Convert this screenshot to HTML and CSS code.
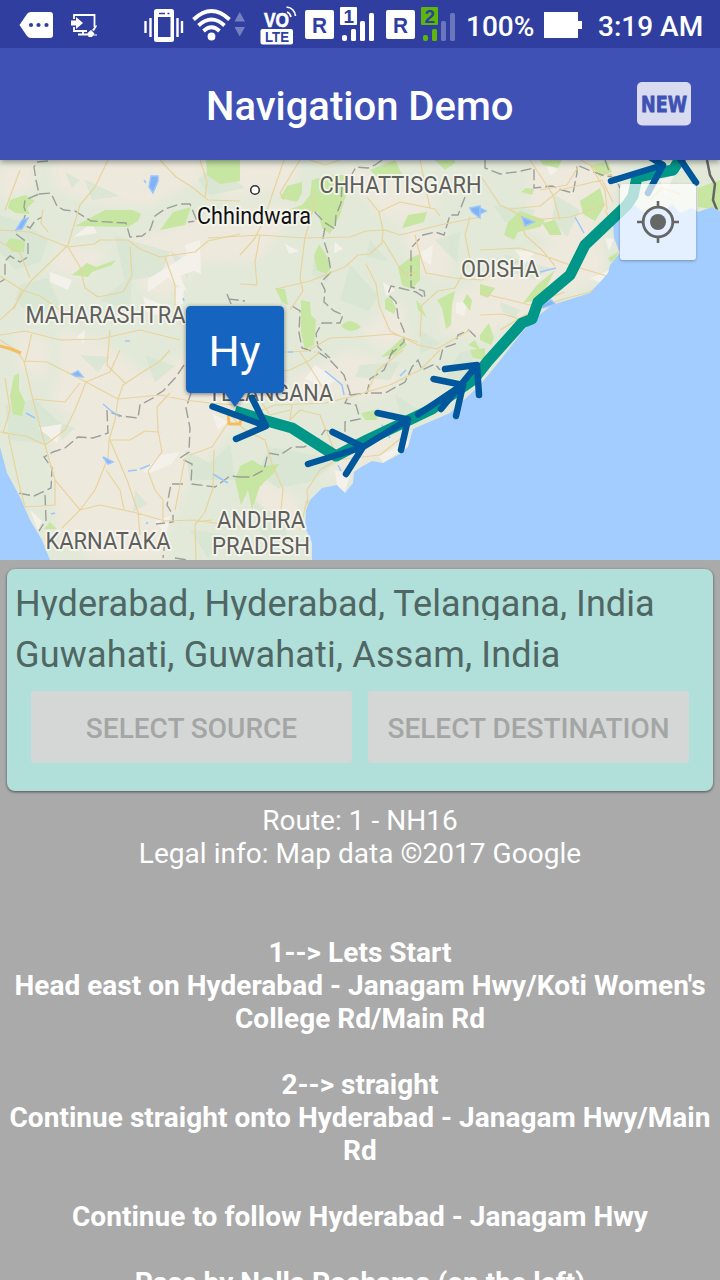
FILE: index.html
```html
<!DOCTYPE html>
<html lang="en">
<head>
<meta charset="utf-8">
<title>Navigation Demo</title>
<link rel="stylesheet" href="styles.css">
</head>
<body>
<div class="screen">
  <div class="status-bar">
    <svg class="status-icon" width="120" height="48" viewBox="0 0 120 48">
      <path fill="#fff" d="M19.500 25L27 14Q28.500 12 31 12H50Q53 12 53 15V35Q53 38 50 38H31Q28.500 38 27 36Z"/>
      <g class="bar-fill"><circle cx="31" cy="25" r="2.100"/><circle cx="38.500" cy="25" r="2.100"/><circle cx="46.500" cy="25" r="2.100"/></g>
      <path fill="none" stroke="#fff" stroke-width="1.800" d="M74 19V15H94.500V27M74 27V31H87M83 31V34M78 34.500H88"/>
      <path fill="#fff" d="M71 20.500H76V17L83 23L76 29V25.500H71ZM87.500 33L91 30L94.500 33.500L92 37H88.500ZM92 30L96 25L97 26L94 31Z"/>
      <path stroke="#fff" d="M93 35H97"/>
    </svg>
    <svg class="status-icon" width="70" height="48" viewBox="120 0 70 48">
      <rect x="154" y="9" width="20" height="33" rx="2.500" fill="#fff"/>
      <rect class="bar-fill" x="158" y="17" width="12.500" height="20"/>
      <path class="bar-line" stroke-width="1.500" d="M159 13.500H165M167.500 13.500H169.500"/>
      <path stroke="#fff" stroke-width="2.400" d="M145.500 21V33M150.500 18V37M177.500 18V37M182 21V33"/>
    </svg>
    <svg class="status-icon" width="60" height="48" viewBox="190 0 60 48">
      <g fill="none" stroke="#fff" stroke-width="3.800"><path d="M193.500 19.500Q211.500 2.500 229.500 19.500"/><path d="M198.500 25.500Q211.500 13.500 224.500 25.500"/><path d="M203.500 31Q211.500 23.500 219.500 31"/></g>
      <circle cx="211.500" cy="36.500" r="3.900" fill="#fff"/>
      <path fill="#7680c0" d="M234.500 21.500L239.700 12L245 21.500ZM234.500 27H245L239.700 36.500Z"/>
    </svg>
    <svg class="status-icon" width="50" height="48" viewBox="250 0 50 48">
      <text class="glyph vo" x="264" y="27" font-size="20" textLength="25" lengthAdjust="spacingAndGlyphs">VO</text>
      <path fill="none" stroke="#fff" stroke-width="1.700" d="M287 12Q290 13 291 17M286.500 7Q294.500 8 295.500 16"/>
      <rect x="260.500" y="29" width="32.500" height="15.500" rx="2" fill="#fff"/>
      <text class="glyph bar-fill" x="265" y="42" font-size="14.500" textLength="24" lengthAdjust="spacingAndGlyphs">LTE</text>
    </svg>
    <svg class="status-icon" width="80" height="48" viewBox="300 0 80 48">
      <rect x="305" y="10" width="29" height="29" rx="2" fill="#fff"/>
      <text class="glyph bar-fill" x="312" y="32.500" font-size="22" textLength="15" lengthAdjust="spacingAndGlyphs">R</text>
      <rect x="340" y="7" width="17" height="18" rx="1" fill="#fff"/>
      <text class="glyph bar-fill" x="343.500" y="22.500" font-size="19">1</text>
      <g fill="#fff"><rect x="342" y="35" width="5" height="6" rx="2"/><rect x="351" y="29" width="5" height="12" rx="1.500"/><rect x="360" y="21" width="5" height="20" rx="1.500"/><rect x="369" y="13" width="5" height="28" rx="1.500"/></g>
    </svg>
    <svg class="status-icon" width="80" height="48" viewBox="380 0 80 48">
      <rect x="386" y="10" width="29" height="29" rx="2" fill="#fff"/>
      <text class="glyph bar-fill" x="393" y="32.500" font-size="22" textLength="15" lengthAdjust="spacingAndGlyphs">R</text>
      <g fill="#5db70b"><rect x="421" y="7" width="17" height="18" rx="1"/><rect x="423" y="35" width="5" height="6" rx="2"/><rect x="432" y="29" width="5" height="12" rx="1.500"/></g>
      <text class="glyph bar-fill" x="424.500" y="22.500" font-size="19">2</text>
      <g fill="#6975bd"><rect x="441" y="21" width="5" height="20" rx="1.500"/><rect x="450" y="13" width="5" height="28" rx="1.500"/></g>
    </svg>
    <span class="battery-level">100%</span>
    <svg class="battery" width="39" height="26" viewBox="0 0 39 26"><path fill="#fff" d="M0 0H34V9H38V17H34V26H0Z"/></svg>
    <span class="clock">3:19 AM</span>
  </div>

  <header class="app-bar">
    <h1 class="app-title">Navigation Demo</h1>
    <svg class="new-badge" width="54" height="44" viewBox="0 0 54 44">
      <rect width="54" height="43.500" rx="5" fill="#d9dcf0"/>
      <text class="new-text" x="4" y="29.500" font-size="21" textLength="46" lengthAdjust="spacingAndGlyphs">NEW</text>
    </svg>
  </header>

  <main class="map">
    <svg class="map-canvas" width="720" height="400" viewBox="0 160 720 400">
      <defs>
        <clipPath id="land"><path d="M0 160H720V211L712 207L698 212L692 208L680 213L672 204L665 211L655 206L645 213L634 205L622 216L613 225L614 238L620 253L610 265L608 273L590 293L552 305L537 317L522 332L502 358L480 385L450 413L413 429L408 447L400 454L383 463L372 461L361 467L354 472L353 483L345 493L337 485L322 488L310 500L306 510L305 527L312 543V560H50L42 540L30 520L20 497L7 473L0 447Z"/></clipPath>
        <filter id="soft"><feGaussianBlur stdDeviation="5"/></filter>
      </defs>
      <rect y="160" width="720" height="400" fill="#a3cdff"/>
      <g clip-path="url(#land)">
        <rect y="160" width="720" height="400" fill="#e2e9d9"/>

        <g class="plains" filter="url(#soft)">
          <path d="M50 160H205L200 180L150 205L90 202L55 188ZM0 165L40 160L30 190L0 200ZM130 240L230 210L300 205L260 260L200 262L165 300L140 290ZM60 245L110 250L85 280L50 270Z"/>
          <path d="M60 330L100 340L145 375L190 350L210 310L245 400L190 430L180 470L150 500L170 560H90L55 500L50 440L75 420L50 400L60 370Z"/>
          <path d="M50 455L150 440L230 375L240 420L190 475L170 530L60 545ZM15 330L50 340L45 380L20 370Z"/>
          <path d="M205 162L300 165L290 190L225 200ZM340 165L400 180L440 200L420 225L380 215ZM400 225L450 235L450 280L415 270ZM445 300L540 250L600 230L605 275L540 305L480 340L440 330Z"/>
          <path d="M530 165L620 165L610 210L570 250L530 230ZM290 380L350 350L400 370L390 395L300 400ZM340 450L410 425L405 445L350 470L320 485ZM250 470L300 500L300 530L260 520ZM360 330L400 300L410 340L380 350Z"/>
        </g>

        <g class="hills">
          <path d="M0 215L25 223L48 240L40 262L15 270L0 252ZM85 180L120 196L92 200ZM20 285L48 278L60 305L30 314L15 300ZM115 236L170 252L160 275L125 281L118 250ZM170 250L190 265L187 278L178 268ZM100 300L132 276L130 310ZM215 165L245 188L210 195L198 180Z"/>
          <path d="M65 172L80 180L72 188ZM80 355L110 357L98 372ZM145 355L175 366L155 382ZM35 399L62 425L45 444L10 440L5 405ZM185 450L210 463L230 445L235 480L190 480ZM58 422L75 428L62 440ZM135 490L147 504L133 512ZM190 530L230 535L208 558ZM235 352L265 367L242 375Z"/>
          <path d="M315 250L332 262L327 282L312 275ZM370 240L388 261L366 257ZM350 265L378 295L369 311L340 300ZM435 240L460 232L457 262L444 250ZM360 365L400 362L390 380L355 377ZM270 447L340 460L310 482L278 488L257 473ZM253 500L282 520L292 547L265 555ZM395 395L420 410L402 420Z"/>
          <path d="M493 205L535 210L530 220L505 222ZM505 255L550 268L535 280L508 271ZM500 302L520 310L515 318L502 311ZM555 195L580 210L567 237L552 221ZM420 330L440 343L420 355ZM460 352L475 350L468 380L445 378Z"/>
        </g>

        <g class="bare">
          <path d="M148 279L190 253L196 270L180 276L187 292L168 278L148 292ZM50 272L72 280L68 290L50 282ZM185 245L200 240L201 274L189 268ZM143 297L163 305L165 317L147 312ZM73 237L92 223L97 233ZM115 213L134 210L127 223ZM176 288L184 286L183 304L174 304ZM77 337L85 330L84 343Z"/>
          <path d="M160 455L180 452L171 464L150 473L143 472ZM212 413L228 422L218 430ZM38 428L62 424L57 443ZM155 521L170 516L166 535ZM30 510L42 521L38 531ZM285 244L299 251L289 254ZM335 242L343 249L334 253ZM421 252L433 245L431 265L423 260ZM456 303L468 300L464 316L456 313ZM383 282L395 290L386 296ZM315 365L337 380L325 386L305 379Z"/>
          <path d="M605 238L614 239L609 251ZM590 278L610 270L601 283ZM335 470L350 475L345 492L337 486ZM391 450L409 438L408 446L383 463L379 456ZM545 160L558 170L550 176ZM515 250L535 252L525 264ZM660 180L674 175L665 195Z"/>
        </g>

        <g class="parks">
          <path d="M206 160H240V181L220 184L207 175ZM10 200L25 195L35 201L27 208L30 214L15 213L8 208ZM10 238L25 241L24 252L12 252L6 244ZM75 226L105 210H133L141 214L138 221L128 227ZM160 230L173 212L191 207L185 225ZM72 275L87 263L96 267L116 260L112 265L92 272L88 277ZM14 376L19 373V390L25 402L22 416L13 414L10 396ZM44 529L50 522L57 529Z"/>
          <path d="M280 198L287 186L302 182L302 193L297 202ZM302 205L310 195L312 180L330 175H346V195L340 215L330 234L322 228L318 212L290 209ZM314 256L319 244L327 256L331 268L326 274L317 270ZM275 288L285 289L288 305L282 302ZM301 300L310 302L311 315L316 320L314 345L305 350L301 332ZM341 326Q350 316 361 327Q350 335 341 326ZM402 228L408 215L427 212L424 222L407 227ZM370 170L395 160L405 180L380 180ZM435 160L445 170L455 163V160ZM398 267L410 258L420 254V280L412 289L402 285ZM385 300L390 296L396 308L394 314L385 309ZM437 300L455 291L452 305L451 325L446 329L442 308ZM416 300L420 304L427 318L418 310Z"/>
          <path d="M508 222L520 211L545 220L540 227L518 232L514 240L504 235ZM526 188L534 189L532 195L521 192ZM580 201L600 188L605 205L595 221L583 214ZM542 223L555 220L562 235L550 235ZM540 160H562L558 168L543 165ZM523 303L537 285L555 270L540 300ZM480 284L495 288L488 298L480 295ZM480 335L489 323L494 338L491 345L480 340ZM608 258L618 252L616 260L610 262ZM698 188L720 180V210L698 207ZM467 294L472 300L470 311L463 302ZM389 350L402 338L407 345L395 355L381 357ZM468 345L475 340L480 350ZM470 350L485 348V360L473 358Z"/>
          <path d="M240 466L252 460L262 466L279 464L273 474L260 486L252 510L248 490L241 505L235 480ZM361 413L375 410L377 420L365 420ZM256 482L265 474L262 486ZM590 165L608 162L612 172L600 177Z"/>
        </g>

        <g class="borders">
          <path d="M48 161L37 162L34 167L36 180L39 194L25 200L24 207L26 213L22 224L30 228L35 221L42 217M39 194L51 193L57 206L64 210L75 211L91 221L126 223L130 237L142 236L150 230L155 216L165 209L180 204L190 204L197 221L188 222M16 234L28 243L28 257L20 262L10 256L5 261L5 279L0 282M227 294L231 304L229 299L237 300L245 301"/>
          <path d="M184 365L176 377L163 391L155 396L153 398L140 405L138 418L121 416L107 411L108 433L93 438L78 437L65 448L53 452L44 457L52 468L51 488L34 496L18 493M45 495L46 520L39 531M191 393L186 408L190 428L189 452L180 458L192 464L191 484L215 487L230 476L240 477M183 484L171 484L167 505L173 515L173 522L156 524M165 540L163 558M175 558L187 560"/>
          <path d="M382 160L375 165L368 168L356 167L352 174M342 186L341 203L336 215L335 229L324 222L312 209M325 228L323 238L328 254L331 272L321 282L325 290L324 302L334 311L343 315L340 323L322 323L316 334L318 347L330 358M465 197L458 215L450 215L444 235L435 232L423 235L411 248L411 287L424 291L425 298L416 292L400 288L391 286L388 294L396 302L398 317L404 331L404 342L390 355M292 306L300 311L299 333L302 348L315 352M440 360L443 348L455 344L458 335L469 330L476 337"/>
          <path d="M318 352L330 360L344 375L350 393L345 403L356 405L360 419L345 422L345 435L325 430L318 440L304 447L292 447L280 455L268 453L264 470L251 477L240 477M350 395L367 393L370 379L384 370L393 350M371 393L385 393L405 382L412 367L418 360L422 370L435 364L440 370"/>
          <path d="M485 160L485 168L500 174L507 173L516 172L534 168L534 188L552 186L562 190L573 193L577 173L577 165L591 171L605 176L615 177L620 188M605 160L610 174L620 187"/>
          <path class="frontier" d="M707 160L710 175L715 184L713 200L717 210"/>
        </g>

        <g class="roads">
          <path d="M108 160L95 187L80 205L68 245L30 282L13 308L0 320M160 160L176 177L192 187L208 200L240 201M200 160L207 182L205 198M0 242L20 253L30 278M0 230L30 232L68 247L94 244L100 240L128 240L140 249L160 257L195 252L208 241L240 234M68 247L80 267L85 288L98 297L123 292L132 276L130 247M165 257L175 285L175 304L182 312L180 325M22 290L40 296L50 303L60 310M0 276L22 290L14 309M0 335L25 331L60 340L100 339L140 330L180 340M110 330L107 365L126 384M32 332L28 350L25 362M43 209L41 223L48 232M5 210L20 170"/>
          <path d="M0 340L16 350L24 361L47 362L86 382L118 399L160 395L185 400L210 403L235 405M24 361L33 400L45 445L55 480L80 510L100 505L137 513L165 521L195 520L240 527M5 378L10 410L3 433L26 436L45 445L65 430L75 410L86 382L110 372L120 350M118 399L115 420L109 440L108 458L95 490L80 510L62 528M118 399L123 385L138 375L160 361L170 350M33 399L65 402L80 383M0 432L8 433L18 480L25 507L55 505L55 480M110 440L127 480L138 512L140 535M109 440L130 440L145 431L158 432L157 407L170 393M148 471L155 490L163 500L163 522M106 470L120 490L124 509M214 450L213 488L205 512L195 525L196 560M190 455L212 447L222 432L228 423M148 471L162 452L158 430M175 510L180 485L185 458M195 522L212 520"/>
          <path d="M208 238L260 235L305 238L350 237L366 231L385 230L400 235L440 225L480 217M260 235L255 262L257 285L240 284M305 238L315 202L310 195M305 237L300 278L303 291L290 310M276 289L310 281L345 267L358 255L370 254L382 243L383 230L379 212L367 197M379 212L400 202L435 209L440 216M366 264L376 284L379 305L390 331L418 345L437 349L470 330M383 240L398 265L405 275L415 272M415 235L420 255L426 273L454 278L482 280L520 260M420 337L422 305L438 291L455 288L470 260L465 235L470 217M240 355L265 353L307 351L330 338L355 337L393 334L418 342M300 160L280 193L284 200M310 160L325 165L340 160M420 160L430 208M255 238L263 222L284 160M240 255L256 237"/>
          <path d="M220 413L250 415L275 405L325 403L350 397L390 385L420 370L440 350M230 375L245 375L290 370L310 360L320 352M300 352L315 375L330 400M367 392L378 370L403 350M230 415L245 430L265 440L272 464L283 489L281 510M307 500L300 530M308 505L307 490L320 470L336 460L380 455L405 435M292 405L290 420L300 410L320 415L336 455M260 400L270 415L290 410"/>
          <path d="M480 175L500 205L530 220L570 217L605 205M510 209L540 206L560 190L602 180L613 202M530 160L553 195L560 220M480 250L520 248L545 256L570 265L607 276M520 218L525 235L542 250L555 266M480 293L510 300L530 305L565 292M540 190L567 185L578 167M620 180L600 170L580 160M500 330L520 318L535 310L560 300L590 292L610 276M605 210L613 225M650 200L662 188L680 194M480 315L503 314L523 320M590 165L605 190L607 210"/>
          <path class="expressway" d="M0 346L11 349L21 353M228 412L229 424L240 424L242 414"/>
        </g>

        <g class="rivers">
          <path d="M151 176L158 176L158 181L153 193L149 187ZM16 230L22 220L28 218L22 229ZM72 374L78 371L83 377L75 376ZM103 457L113 462L108 464ZM470 208L480 206V218L472 212ZM522 217L534 222L525 226ZM480 208L486 211L480 214ZM540 306L551 300L555 304L543 308Z"/>
          <path d="M103 404L110 410L120 417M26 413L35 418M128 471L137 470M140 469L150 465M213 474L228 483M325 371L342 385L344 395M400 376L406 370M338 465L341 471M382 425L390 438M575 217L584 233M540 272L556 268M144 180L146 183M51 514L55 513M146 524L148 522M125 341L130 341M288 352L293 352M184 301L183 298"/>
        </g>
      </g>

      <circle cx="255" cy="190" r="4.300" fill="#fff" stroke="#333" stroke-width="1.600"/>
      <g class="map-labels">
        <text x="319.500" y="193" textLength="162" lengthAdjust="spacingAndGlyphs">CHHATTISGARH</text>
        <text x="461" y="277" textLength="78" lengthAdjust="spacingAndGlyphs">ODISHA</text>
        <text x="25.500" y="323" textLength="160" lengthAdjust="spacingAndGlyphs">MAHARASHTRA</text>
        <text x="208" y="401" textLength="125" lengthAdjust="spacingAndGlyphs">TELANGANA</text>
        <text x="45.500" y="549" textLength="125" lengthAdjust="spacingAndGlyphs">KARNATAKA</text>
        <text x="217" y="528" textLength="88" lengthAdjust="spacingAndGlyphs">ANDHRA</text>
        <text x="212" y="554" textLength="98" lengthAdjust="spacingAndGlyphs">PRADESH</text>
        <text class="city" x="197" y="223.500" textLength="114" lengthAdjust="spacingAndGlyphs">Chhindwara</text>
      </g>

      <path class="route" d="M235 411L267 421L292 428L336 456L367 440L407 421L432 409L447 398L473 380L488 361L522 323L532 319L538 302L570 275L585 245L627 205L633 196L637 177L673 170L682 156"/>
      <path class="arrows" d="M212.500 406.500L266 426L252 398M266 426L236 439M308 464L363 447L332.500 432M363 447L346 474M363 447L408 419.500L377.500 413M408 419.500L401 450M418 414.500L463 385L433.500 379M463 385L456 416M441 409L477 365L445 369M477 365L479 395M611 181L663 165L643 153M663 165L648 193M696 182.500L676 153"/>
      <g class="marker">
        <path d="M191 306H279Q284 306 284 311V388Q284 393 279 393H245L235 407L225 393H191Q186 393 186 388V311Q186 306 191 306Z"/>
        <text x="208.500" y="366" textLength="52" lengthAdjust="spacingAndGlyphs">Hy</text>
      </g>
    </svg>
    <button class="locate" aria-label="My location">
      <svg width="42" height="42" viewBox="-21 -21 42 42"><circle r="14.800" fill="none" stroke="#666" stroke-width="2.800"/><circle r="8" fill="#666"/><path stroke="#666" stroke-width="2.600" d="M-21 0H-14M14 0H21M0 -21V-14M0 14V21"/></svg>
    </button>
  </main>

  <section class="trip-card">
    <p class="place place-source">Hyderabad, Hyderabad, Telangana, India</p>
    <p class="place place-destination">Guwahati, Guwahati, Assam, India</p>
    <div class="actions">
      <button class="action">SELECT SOURCE</button>
      <button class="action">SELECT DESTINATION</button>
    </div>
  </section>

  <section class="directions">
    <p>Route: 1 - NH16<br>Legal info: Map data ©2017 Google</p>
    <p class="step first-step">1--&gt; Lets Start<br>Head east on Hyderabad - Janagam Hwy/Koti Women's<br>College Rd/Main Rd</p>
    <p class="step">2--&gt; straight<br>Continue straight onto Hyderabad - Janagam Hwy/Main<br>Rd</p>
    <p class="step">Continue to follow Hyderabad - Janagam Hwy</p>
    <p class="step">Pass by Nalla Pochama (on the left)</p>
  </section>
</div>
</body>
</html>
```
FILE: styles.css
```css
* { box-sizing: border-box; }
body { margin: 0; background: #aaa; font-family: Roboto, "Noto Sans", sans-serif; }
p, h1 { margin: 0; }
button { border: 0; padding: 0; font-family: inherit; }
.screen { width: 720px; height: 1280px; overflow: hidden; display: flex; flex-direction: column; background: #aaa; }

.status-bar { flex: none; height: 48px; display: flex; align-items: center; position: relative; z-index: 2; background: #303f9f; color: #fff; font-size: 28px; font-weight: 500; line-height: 48px; white-space: nowrap; }
.status-icon { flex: none; display: block; }
.bar-fill { fill: #303f9f; }
.bar-line { stroke: #303f9f; }
.glyph { font-family: "Liberation Sans", sans-serif; font-weight: 700; }
.vo { fill: #fff; stroke: #fff; stroke-width: .6px; }
.battery-level { width: 84px; padding: 5px 0 0 6px; }
.battery { flex: none; margin-top: 2px; }
.clock { padding: 5px 0 0 15px; }

.app-bar { flex: none; height: 112px; padding: 5px 29px 0 206px; display: flex; align-items: center; justify-content: space-between; background: #3f51b5; color: #fff; position: relative; z-index: 1; box-shadow: 0 2px 6px rgba(0, 0, 0, .4); }
.app-title { margin-top: 1px; font-size: 40px; font-weight: 500; line-height: 48px; white-space: nowrap; }
.new-badge { margin-top: -5px; }
.new-text { font-family: "DejaVu Sans", sans-serif; font-weight: 700; fill: #3f51b5; stroke: #3f51b5; stroke-width: .8px; }

.map { flex: none; height: 400px; position: relative; overflow: hidden; }
.map-canvas { display: block; }
.plains { fill: #eee9dd; }
.hills { fill: #d6e4d1; opacity: .75; }
.bare { fill: #f4f1eb; }
.parks { fill: #c7e6a1; }
.borders path { fill: none; stroke: #9c9e9a; stroke-width: 1.4; stroke-dasharray: 11 4; }
.borders .frontier { stroke: #666; stroke-width: 2.5; stroke-dasharray: none; }
.roads path { fill: none; stroke: #e8d39c; stroke-width: 1.2; stroke-linejoin: round; }
.roads .expressway { stroke: #f5bd61; stroke-width: 3; }
.rivers path { fill: #82b4f5; stroke: #9cc6fb; stroke-width: 1.5; }
.rivers path + path { fill: none; }
.map-labels text { font-size: 24px; fill: #5f5f5c; stroke: #f7f7f0; stroke-width: 4px; stroke-linejoin: round; stroke-opacity: .85; paint-order: stroke; }
.map-labels .city { fill: #111; font-size: 23.5px; }
.route { fill: none; stroke: #009688; stroke-width: 11; stroke-linejoin: round; }
.arrows { fill: none; stroke: #01579b; stroke-width: 6.5; stroke-linecap: round; stroke-linejoin: round; }
.marker path { fill: #1565c0; filter: drop-shadow(0 1px 2px rgba(0, 0, 0, .5)); }
.marker text { fill: #fff; font-size: 43px; }
.locate { position: absolute; top: 24px; right: 24px; width: 76px; height: 76px; display: flex; align-items: center; justify-content: center; background: rgba(255, 255, 255, .7); border-radius: 3px; box-shadow: 0 1px 3px rgba(0, 0, 0, .3); }

.trip-card { flex: none; height: 222px; margin: 9px 7px 0; padding: 9px 8px 0; background: #b1dfd9; border-radius: 8px; box-shadow: 0 1px 3px rgba(0, 0, 0, .55); }
.place { height: 51px; font-size: 36px; line-height: 53px; color: #4f6663; white-space: nowrap; }
.place-source { height: 42px; margin-bottom: 9px; overflow: hidden; letter-spacing: .04px; }
.place-destination { letter-spacing: .17px; }
.actions { display: grid; grid-template-columns: 321px 321px; gap: 16px; padding: 11px 16px 0; }
.action { height: 72px; padding-top: 2px; background: #d5d7d6; border-radius: 3px; color: #a4a6a5; font-size: 28px; font-weight: 500; white-space: nowrap; }

.directions { padding-top: 13px; display: flex; flex-direction: column; gap: 33px; text-align: center; color: #fff; font-size: 28px; line-height: 33px; letter-spacing: .03px; white-space: nowrap; }
.step { font-weight: 700; }
.first-step { margin-top: 33px; }
```
